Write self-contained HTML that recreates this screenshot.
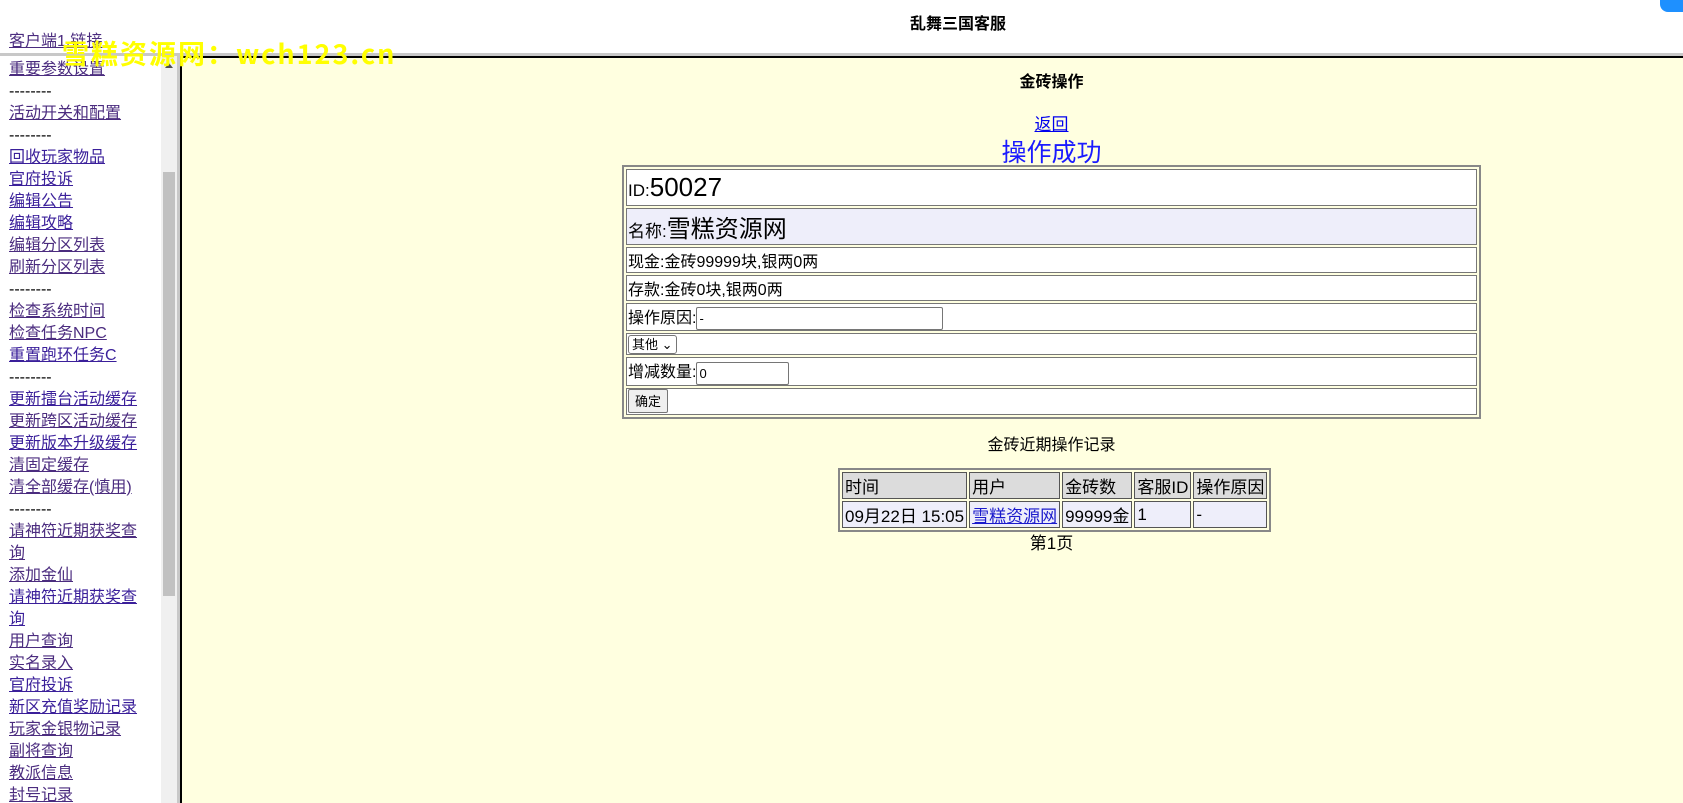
<!DOCTYPE html>
<html><head><meta charset="utf-8">
<style>
*{margin:0;padding:0;box-sizing:border-box}
body{width:1683px;height:803px;overflow:hidden;background:#fff;font-family:"Liberation Sans","Noto Sans CJK SC",sans-serif;position:relative;color:#000}
#top{position:absolute;left:0;top:0;width:1683px;height:53px;background:#fff}
#title{position:absolute;top:10px;left:858px;width:200px;text-align:center;font-weight:bold;font-size:16px}
#blue{position:absolute;right:0;top:0;width:23px;height:12px;background:#1e90ff;border-radius:0 0 0 8px}
#hsep{position:absolute;left:0;top:53px;width:1683px;height:3px;background:#c8c8c8}
#hline{position:absolute;left:180px;top:56px;width:1503px;height:2px;background:#000}
#left{position:absolute;left:0;top:56px;width:177px;height:747px;background:#fff;overflow:hidden}
#sb{position:absolute;left:161px;top:56px;width:16px;height:747px;background:#f0f0f0}
#thumb{position:absolute;left:163px;top:172px;width:12px;height:424px;background:#c1c1c1}
#arrow{position:absolute;left:165px;top:63px;width:0;height:0;border-left:4px solid transparent;border-right:4px solid transparent;border-bottom:5px solid #505050}
#vsep{position:absolute;left:177px;top:56px;width:3px;height:747px;background:#c8c8c8}
#vline{position:absolute;left:180px;top:56px;width:2px;height:747px;background:#000}
#main{position:absolute;left:182px;top:58px;width:1501px;height:745px;background:#ffffe0}
.nav{position:absolute;left:9px;font-size:16px;line-height:22px;white-space:nowrap}
.nav a{color:#3a1f9a;text-decoration:underline}
.nav a.v{color:#4b2c7f}
#wm{position:absolute;left:62px;top:33px;font-size:27px;font-weight:bold;color:#ffff00;white-space:nowrap;font-family:"Noto Sans CJK SC","Liberation Sans",sans-serif;letter-spacing:2px}
.c{position:absolute;left:622px;width:859px;text-align:center}
table.t{position:absolute;left:622px;top:165px;width:859px;border:2px solid #888;border-collapse:separate;border-spacing:2px;font-size:16px}
table.t td{border:1px solid #777;padding:0 1px;background:#fff;text-align:left;vertical-align:middle}
table.r{position:absolute;left:838px;top:468px;width:427px;border:2px solid #888;border-collapse:separate;border-spacing:2px;font-size:17px}
table.r td{border:1px solid #555;padding:0 2px;height:25px;white-space:nowrap}
input.tx{height:23px;border:1px solid #767676;border-radius:2px;font-size:13px;padding:0 2px;vertical-align:middle;background:#fff}
</style></head><body>
<div id="top"><div id="title">乱舞三国客服</div><div id="blue"></div></div>
<div class="nav" style="top:31px"><a class="v">客户端1.链接</a></div>
<div id="hsep"></div><div id="hline"></div>
<div id="left">
<div class="nav" style="top:3px;line-height:22px">
<a class="v">重要参数设置</a><br>--------<br><a class="v">活动开关和配置</a><br>--------<br><a>回收玩家物品</a><br><a>官府投诉</a><br><a>编辑公告</a><br><a>编辑攻略</a><br><a class="v">编辑分区列表</a><br><a class="v">刷新分区列表</a><br>--------<br><a class="v">检查系统时间</a><br><a class="v">检查任务NPC</a><br><a>重置跑环任务C</a><br>--------<br><a>更新擂台活动缓存</a><br><a class="v">更新跨区活动缓存</a><br><a>更新版本升级缓存</a><br><a class="v">清固定缓存</a><br><a class="v">清全部缓存(慎用)</a><br>--------<br><a class="v">请神符近期获奖查<br>询</a><br><a class="v">添加金仙</a><br><a>请神符近期获奖查<br>询</a><br><a class="v">用户查询</a><br><a class="v">实名录入</a><br><a>官府投诉</a><br><a>新区充值奖励记录</a><br><a class="v">玩家金银物记录</a><br><a class="v">副将查询</a><br><a class="v">教派信息</a><br><a class="v">封号记录</a>
</div></div>
<div id="sb"></div><div id="thumb"></div><div id="arrow"></div>
<div id="vsep"></div><div id="vline"></div>
<div id="main"></div>
<div id="wm">雪糕资源网：wch123.cn</div>
<div class="c" style="top:68px;font-weight:bold;font-size:16px">金砖操作</div>
<div class="c" style="top:110px;font-size:17px"><a style="color:#00e;text-decoration:underline">返回</a></div>
<div class="c" style="top:133px;font-size:25px;color:#1a1aff">操作成功</div>
<table class="t">
<tr><td style="height:37px"><span style="font-size:17px">ID:</span><span style="font-size:26px">50027</span></td></tr>
<tr><td style="height:36px;background:#eeeefa"><span style="font-size:17px">名称:</span><span style="font-size:24px">雪糕资源网</span></td></tr>
<tr><td style="height:23px">现金:金砖99999块,银两0两</td></tr>
<tr><td style="height:23px">存款:金砖0块,银两0两</td></tr>
<tr><td style="height:25px">操作原因:<input class="tx" style="width:247px" value="-"></td></tr>
<tr><td style="height:22px"><span style="display:inline-block;border:1px solid #767676;border-radius:3px;font-size:13px;padding:0 3px;background:#fff;height:19px;line-height:17px">其他 ⌄</span></td></tr>
<tr><td style="height:25px">增减数量:<input class="tx" style="width:93px" value="0"></td></tr>
<tr><td style="height:27px"><span style="display:inline-block;border:1px solid #767676;border-radius:2px;background:#efefef;font-size:13px;padding:0 6px;height:24px;line-height:23px">确定</span></td></tr>
</table>
<div class="c" style="top:431px;font-size:16px">金砖近期操作记录</div>
<table class="r">
<tr style="background:#dcdcdc"><td style="width:127px">时间</td><td style="width:90px">用户</td><td style="width:71px">金砖数</td><td>客服ID</td><td>操作原因</td></tr>
<tr style="background:#eeeefa"><td>09月22日 15:05</td><td><a style="color:#1a1acc;text-decoration:underline">雪糕资源网</a></td><td>99999金</td><td>1</td><td>-</td></tr>
</table>
<div class="c" style="top:529px;font-size:17px">第1页</div>
</body></html>
